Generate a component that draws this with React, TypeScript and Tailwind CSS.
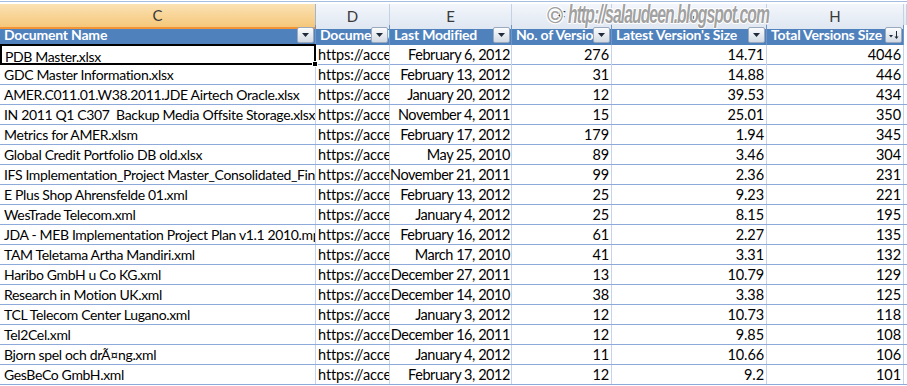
import React from "react";

const rows: [string, string, string, string, string][] = [
  ["PDB Master.xlsx", "February 6, 2012", "276", "14.71", "4046"],
  ["GDC Master Information.xlsx", "February 13, 2012", "31", "14.88", "446"],
  ["AMER.C011.01.W38.2011.JDE Airtech Oracle.xlsx", "January 20, 2012", "12", "39.53", "434"],
  ["IN 2011 Q1 C307  Backup Media Offsite Storage.xlsx", "November 4, 2011", "15", "25.01", "350"],
  ["Metrics for AMER.xlsm", "February 17, 2012", "179", "1.94", "345"],
  ["Global Credit Portfolio DB old.xlsx", "May 25, 2010", "89", "3.46", "304"],
  ["IFS Implementation_Project Master_Consolidated_Final.xlsx", "November 21, 2011", "99", "2.36", "231"],
  ["E Plus Shop Ahrensfelde 01.xml", "February 13, 2012", "25", "9.23", "221"],
  ["WesTrade Telecom.xml", "January 4, 2012", "25", "8.15", "195"],
  ["JDA - MEB Implementation Project Plan v1.1 2010.mpp", "February 16, 2012", "61", "2.27", "135"],
  ["TAM Teletama Artha Mandiri.xml", "March 17, 2010", "41", "3.31", "132"],
  ["Haribo GmbH u Co KG.xml", "December 27, 2011", "13", "10.79", "129"],
  ["Research in Motion UK.xml", "December 14, 2010", "38", "3.38", "125"],
  ["TCL Telecom Center Lugano.xml", "January 3, 2012", "12", "10.73", "118"],
  ["Tel2Cel.xml", "December 16, 2011", "12", "9.85", "108"],
  ["Bjorn spel och drÃ¤ng.xml", "January 4, 2012", "11", "10.66", "106"],
  ["GesBeCo GmbH.xml", "February 3, 2012", "12", "9.2", "101"],
];

const grid = "grid grid-cols-[316px_74px_122px_100px_155px_137px_1fr]";
const font = { fontFamily: "Lato, 'Liberation Sans', sans-serif" };
const cell = "whitespace-pre text-[14px] tracking-[-0.35px] leading-[19px]";
const num = "whitespace-pre text-[14.5px] tracking-[-0.1px] leading-[19px]";

function DropBtn({ sort }: { sort?: boolean }) {
  return (
    <div className="absolute right-[1px] top-[2px] w-[17px] h-[16px] border border-[#9aa9bd] rounded-[2px] bg-gradient-to-b from-[#fbfcfd] to-[#d3dae4] flex items-center justify-center">
      {sort ? (
        <svg width="13" height="12" viewBox="0 0 13 12">
          <path d="M2 6 L6 6 L4 8.5 Z" fill="#1e2a3a" />
          <rect x="9" y="2" width="1" height="7" fill="#1e2a3a" />
          <path d="M7.5 7.5 L11.5 7.5 L9.5 10 Z" fill="#1e2a3a" />
        </svg>
      ) : (
        <svg width="9" height="6" viewBox="0 0 9 6">
          <path d="M1 1 L8 1 L4.5 5 Z" fill="#1e2a3a" />
        </svg>
      )}
    </div>
  );
}

export default function App() {
  const colLetters = ["C", "D", "E", "F", "G", "H", ""];
  const headers = [
    "Document Name",
    "Document URL",
    "Last Modified",
    "No. of Versions",
    "Latest Version's Size",
    "Total Versions Size",
  ];
  const shadow =
    "1px 0 0 rgba(255,255,255,0.9), -1px 0 0 rgba(255,255,255,0.9), 0 1px 0 rgba(255,255,255,0.9), 0 -1px 0 rgba(255,255,255,0.9), 1px 1px 0 rgba(255,255,255,0.7), -1px -1px 0 rgba(255,255,255,0.7), 1px -1px 0 rgba(255,255,255,0.7), -1px 1px 0 rgba(255,255,255,0.7)";
  return (
    <div className="relative w-[907px] h-[386px] bg-white overflow-hidden text-black" style={font}>
      {/* top line */}
      <div className="h-[1px] bg-white" />
      <div className="h-[1px] bg-[#a4bde0]" />
      <div className="h-[2px] bg-white" />
      {/* column letters */}
      <div className={`${grid} h-[21px] border-b border-[#9eb6ce]`}>
        {colLetters.map((l, i) => (
          <div
            key={i}
            className={
              i === 0
                ? "flex items-center justify-center bg-gradient-to-b from-[#fbe2b4] to-[#f5c779] border-r border-[#9eb6ce] border-b-2 border-b-[#f29436] text-[15px] text-[#3a3a3a]"
                : "flex items-center justify-center bg-gradient-to-b from-[#f3f6fb] to-[#dfe7f2] border-r border-[#c5d2e3] text-[15px] text-[#3a3a3a]"
            }
          >
            {l}
          </div>
        ))}
      </div>
      {/* table header */}
      <div className={`${grid} h-[20px] bg-[#4f81bd]`}>
        {headers.map((h, i) => (
          <div
            key={i}
            className="relative overflow-hidden whitespace-nowrap text-white font-bold text-[14px] tracking-[-0.2px] leading-[20px] pl-[4px] border-r border-[#6f95c8]"
          >
            {h}
            <DropBtn sort={i === 5} />
          </div>
        ))}
        <div className="bg-white" />
      </div>
      {/* data rows */}
      {rows.map((r, idx) => (
        <div key={idx} className={`${grid} h-[20px] border-b border-[#8eaadb]`}>
          <div
            className={
              idx === 0
                ? `relative ${cell} leading-[16px] pl-[3px] border-2 border-black -mt-[1px] h-[21px] pt-[1px] z-10`
                : `overflow-hidden ${cell} pl-[4px] border-r border-[#c6d4ea]`
            }
          >
            {idx === 0 ? (
              <>
                {r[0]}
                <div className="absolute -right-[4px] -bottom-[4px] w-[6px] h-[6px] bg-black border border-white" />
              </>
            ) : (
              r[0]
            )}
          </div>
          <div className={`overflow-hidden ${num} pl-[2px] border-r border-[#c6d4ea]`}>
            https://accessportal.company.com/sites
          </div>
          <div className="flex justify-end overflow-hidden whitespace-pre text-[14.5px] tracking-[-0.45px] leading-[19px] pr-[1px] border-r border-[#c6d4ea]">
            <span className="shrink-0">{r[1]}</span>
          </div>
          <div className={`${num} pr-[2px] text-right border-r border-[#c6d4ea]`}>{r[2]}</div>
          <div className={`${num} pr-[2px] text-right border-r border-[#c6d4ea]`}>{r[3]}</div>
          <div className={`${num} pr-[2px] text-right border-r border-[#c6d4ea]`}>{r[4]}</div>
          <div className="bg-white" />
        </div>
      ))}
      {/* watermark */}
      <div
        className="absolute top-[2px] left-[547px] flex items-baseline whitespace-nowrap italic font-bold text-[rgba(100,100,100,0.62)] pointer-events-none"
        style={{ fontFamily: "'Liberation Sans', Arial, sans-serif", textShadow: shadow }}
      >
        <span className="text-[22px] leading-[24px] not-italic">©</span>
        <span className="ml-[5px] inline-block origin-left scale-x-[0.63] text-[25px] leading-[24px] tracking-[-1.5px]">
          http://salaudeen.blogspot.com
        </span>
      </div>
    </div>
  );
}
